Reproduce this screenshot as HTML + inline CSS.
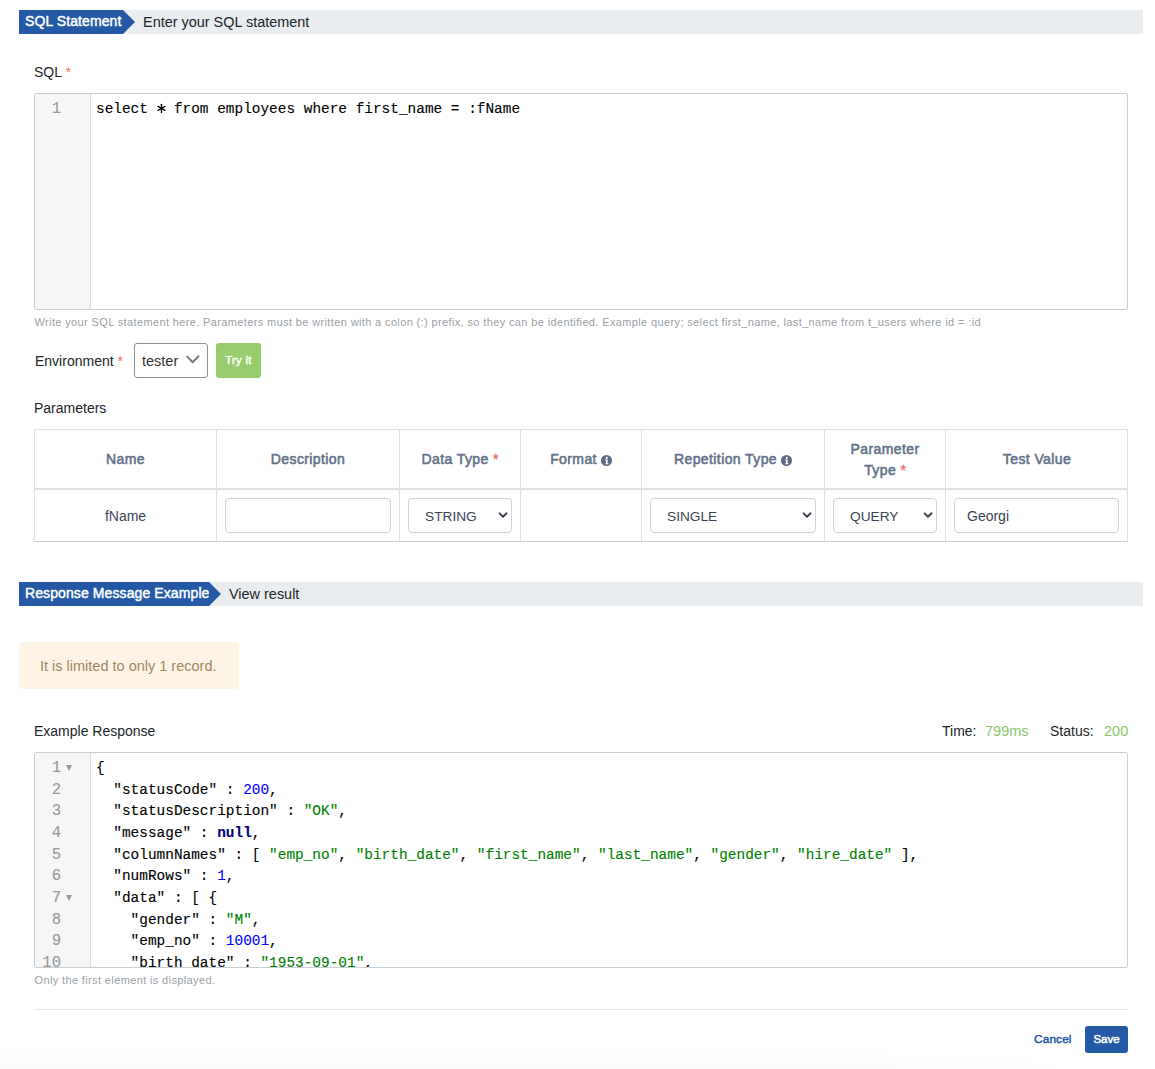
<!DOCTYPE html>
<html><head><meta charset="utf-8">
<style>
*{box-sizing:border-box;margin:0;padding:0}
html,body{width:1155px;height:1069px;overflow:hidden;background:#fff}
body{position:relative;font-family:"Liberation Sans",sans-serif;color:#212529;font-size:14px}
.a{position:absolute;white-space:nowrap}
.bar{position:absolute;left:19px;width:1124px;height:24px;background:#e9edef}
.tag{position:absolute;white-space:nowrap;left:0;top:0;height:24px;background:#2359a5;color:#fff;font-size:14px;letter-spacing:0.1px;-webkit-text-stroke:0.45px #fff;line-height:22px;padding-left:6px}
.tag:after{content:"";position:absolute;right:-12px;top:0;border-left:12px solid #2359a5;border-top:12px solid transparent;border-bottom:12px solid transparent}
.sub{position:absolute;white-space:nowrap;top:0;line-height:24px;font-size:14.45px;color:#212529}
.req{color:#ec6d6d;-webkit-text-stroke:0;letter-spacing:0}
.th .req{-webkit-text-stroke:0.4px #ec6d6d}
.mono{font-family:"Liberation Mono",monospace;font-size:14.43px;-webkit-text-stroke:0.12px}
.editor{position:absolute;left:34px;width:1094px;border:1px solid #c9ced6;border-radius:2px;background:#fff;overflow:hidden}
.gutter{position:absolute;left:0;top:0;bottom:0;width:56px;background:#f6f6f6;border-right:1px solid #dcdcdc}
.ln{position:absolute;right:29px;color:#999;text-align:right}
.fold{position:absolute;left:31px;width:0;height:0;border-left:3px solid transparent;border-right:3px solid transparent;border-top:6px solid #999}
.code{position:absolute;left:61px;color:#000;white-space:pre}
.help{font-size:11px;letter-spacing:0.37px;color:#9aa0a6}
.th{position:absolute;color:#627188;text-align:center;font-size:14px;letter-spacing:0.4px;-webkit-text-stroke:0.55px #627188}
.vline{position:absolute;top:429px;width:1px;height:112px;background:#dee2e6}
.inp{position:absolute;top:498px;height:35px;border:1px solid #ced4da;border-radius:4px;background:#fff}
.sel{position:absolute;top:498px;height:35px;border:1px solid #ced4da;border-radius:4px;background:#fff;color:#3b4452;font-size:13.7px}
.chev{position:absolute;width:7px;height:7px;border-right:2px solid #333;border-bottom:2px solid #333;transform:rotate(45deg)}
.info{display:inline-block;width:11px;height:11px;vertical-align:-1.5px;margin-left:4px}
.s{color:#008000}.n{color:#0000ff}.k{color:#000080;font-weight:bold}
</style></head><body>

<!-- Header 1 -->
<div class="bar" style="top:10px">
  <div class="tag" style="width:104px">SQL Statement</div>
  <div class="sub" style="left:124px">Enter your SQL statement</div>
</div>

<div class="a" style="left:34px;top:62px;line-height:20px">SQL <span class="req">*</span></div>

<div class="editor" style="top:93px;height:217px">
  <div class="gutter"></div>
  <div class="a mono" style="left:0;top:5px;width:26px;line-height:21.67px;color:#999;text-align:right;font-size:15.6px">1</div>
  <div class="code mono" style="top:5px;line-height:21.67px">select <span style="display:inline-block;width:8.66px;position:relative;height:10px"><svg style="position:absolute;left:0;top:0" width="9" height="10" viewBox="0 0 9 10"><g stroke="#000" stroke-width="1.35" stroke-linecap="round"><line x1="4.5" y1="1.3" x2="4.5" y2="9.5"/><line x1="1" y1="3.4" x2="8" y2="7.4"/><line x1="1" y1="7.4" x2="8" y2="3.4"/></g></svg></span> from employees where first_name = :fName</div>
</div>

<div class="a help" style="left:34.5px;top:315px;line-height:14px">Write your SQL statement here. Parameters must be written with a colon (:) prefix, so they can be identified. Example query; select first_name, last_name from t_users where id = :id</div>

<div class="a" style="left:35px;top:351px;line-height:20px">Environment <span class="req">*</span></div>
<div class="a" style="left:134px;top:343px;width:74px;height:35px;border:1px solid #8f8f8f;border-radius:3px;background:#fff">
  <div class="a" style="left:7px;top:7px;line-height:20px;font-size:14.5px;color:#333">tester</div>
</div>
<div class="a" style="left:216px;top:343px;width:45px;height:35px;background:#98cd6e;border-radius:3px;color:#fff;font-size:11.3px;letter-spacing:0.3px;-webkit-text-stroke:0.45px #fff;line-height:34px;text-align:center">Try it</div>

<div class="a" style="left:34px;top:398px;line-height:20px">Parameters</div>

<!-- Table -->
<div class="a" style="left:34px;top:429px;width:1094px;height:113px;border:1px solid #dee2e6;border-bottom-color:#c9cbce"></div>
<div class="a" style="left:34px;top:488px;width:1094px;height:2px;background:#dee2e6"></div>
<div class="vline" style="left:216px"></div>
<div class="vline" style="left:399px"></div>
<div class="vline" style="left:520px"></div>
<div class="vline" style="left:641px"></div>
<div class="vline" style="left:824px"></div>
<div class="vline" style="left:945px"></div>

<div class="th" style="left:35px;width:181px;top:449px;line-height:20px">Name</div>
<div class="th" style="left:217px;width:182px;top:449px;line-height:20px">Description</div>
<div class="th" style="left:400px;width:120px;top:449px;line-height:20px">Data Type <span class="req">*</span></div>
<div class="th" style="left:521px;width:120px;top:449px;line-height:20px">Format<svg class="info" viewBox="0 0 11 11"><circle cx="5.5" cy="5.5" r="5.5" fill="#5c6b82"/><circle cx="5.8" cy="2.9" r="1.05" fill="#fff"/><path d="M4.2 4.6h2.4v3.6h0.8v1.1H4.2V8.2h0.8V5.7h-0.8z" fill="#fff"/></svg></div>
<div class="th" style="left:642px;width:182px;top:449px;line-height:20px">Repetition Type<svg class="info" viewBox="0 0 11 11"><circle cx="5.5" cy="5.5" r="5.5" fill="#5c6b82"/><circle cx="5.8" cy="2.9" r="1.05" fill="#fff"/><path d="M4.2 4.6h2.4v3.6h0.8v1.1H4.2V8.2h0.8V5.7h-0.8z" fill="#fff"/></svg></div>
<div class="th" style="left:825px;width:120px;top:439px;line-height:21px;white-space:normal">Parameter<br>Type <span class="req">*</span></div>
<div class="th" style="left:946px;width:182px;top:449px;line-height:20px">Test Value</div>

<div class="a" style="left:35px;width:181px;top:506px;line-height:20px;text-align:center;color:#3b4452">fName</div>
<div class="inp" style="left:225px;width:166px"></div>
<div class="sel" style="left:408px;width:104px">
  <div class="a" style="left:16px;top:8px;line-height:20px">STRING</div>
</div>
<div class="sel" style="left:650px;width:166px">
  <div class="a" style="left:16px;top:8px;line-height:20px">SINGLE</div>
</div>
<div class="sel" style="left:833px;width:104px">
  <div class="a" style="left:16px;top:8px;line-height:20px">QUERY</div>
</div>
<div class="inp" style="left:954px;width:165px">
  <div class="a" style="left:12px;top:7px;line-height:20px;color:#3b4452">Georgi</div>
</div>

<svg class="a" style="left:0;top:0" width="1155" height="1069">
<g fill="none" stroke-linecap="round" stroke-linejoin="round">
<polyline points="187.2,356.6 192.7,362.2 198.5,356.3" stroke="#7a7a7a" stroke-width="2"/>
<polyline points="499.6,513.4 503,516.8 506.5,513.3" stroke="#3d4550" stroke-width="2"/>
<polyline points="803.6,513.4 807,516.8 810.5,513.3" stroke="#3d4550" stroke-width="2"/>
<polyline points="924.6,513.4 928,516.8 931.5,513.3" stroke="#3d4550" stroke-width="2"/>
</g></svg>

<!-- Header 2 -->
<div class="bar" style="top:582px">
  <div class="tag" style="width:190px">Response Message Example</div>
  <div class="sub" style="left:210px">View result</div>
</div>

<div class="a" style="left:19px;top:642px;width:220px;height:47px;background:#fef4e6;border-radius:4px;color:#a3875e;font-size:14.5px;line-height:49px;padding-left:21px">It is limited to only 1 record.</div>

<div class="a" style="left:34px;top:721px;line-height:20px">Example Response</div>
<div class="a" style="left:942px;top:721px;line-height:20px">Time:</div>
<div class="a" style="left:985px;top:721px;line-height:20px;font-size:14.5px;color:#8bc76a">799ms</div>
<div class="a" style="left:1050px;top:721px;line-height:20px">Status:</div>
<div class="a" style="left:1104px;top:721px;line-height:20px;font-size:14.5px;color:#8bc76a">200</div>

<div class="editor" style="top:752px;height:216px">
  <div class="gutter"></div>
  <div class="a mono" style="left:0;top:5px;width:26px;line-height:21.67px;color:#999;text-align:right;white-space:pre;font-size:15.6px">1
2
3
4
5
6
7
8
9
10</div>
  <div class="fold" style="top:12px"></div>
  <div class="fold" style="top:142px"></div>
  <div class="code mono" style="top:5px;line-height:21.67px">{
  "statusCode" : <span class="n">200</span>,
  "statusDescription" : <span class="s">"OK"</span>,
  "message" : <span class="k">null</span>,
  "columnNames" : [ <span class="s">"emp_no"</span>, <span class="s">"birth_date"</span>, <span class="s">"first_name"</span>, <span class="s">"last_name"</span>, <span class="s">"gender"</span>, <span class="s">"hire_date"</span> ],
  "numRows" : <span class="n">1</span>,
  "data" : [ {
    "gender" : <span class="s">"M"</span>,
    "emp_no" : <span class="n">10001</span>,
    "birth_date" : <span class="s">"1953-09-01"</span>,</div>
</div>

<div class="a help" style="left:34.5px;top:973px;line-height:14px">Only the first element is displayed.</div>

<div class="a" style="left:34px;top:1009px;width:1094px;height:1px;background:#e6e8eb"></div>

<div class="a" style="left:1034px;top:1030px;line-height:18px;font-size:11.8px;letter-spacing:0.15px;-webkit-text-stroke:0.5px #2359a5;color:#2359a5">Cancel</div>
<div class="a" style="left:1085px;top:1026px;width:43px;height:27px;background:#2359a5;border-radius:3px;color:#fff;font-size:11.5px;-webkit-text-stroke:0.5px #fff;line-height:27px;text-align:center">Save</div>

<div class="a" style="left:0;top:1053px;width:1155px;height:16px;background:linear-gradient(#fff,#fafafa);-webkit-mask-image:linear-gradient(90deg,#000 60%,transparent 95%)"></div>
</body></html>
